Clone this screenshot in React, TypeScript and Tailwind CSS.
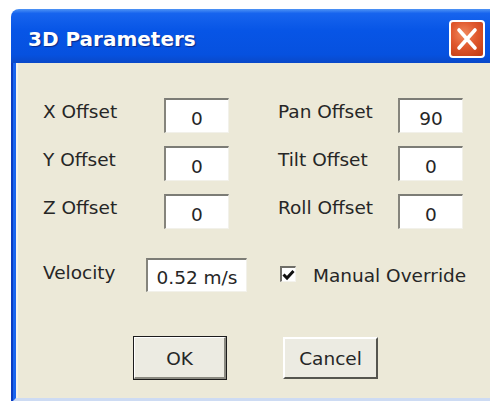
import React from "react";

const font = "font-['DejaVu_Sans','Liberation_Sans',sans-serif]";
const txt = "text-[18.5px] leading-[18px] text-[#262626]";

function Field({ value, w, h }: { value: string; w: string; h: string }) {
  return (
    <div
      className={`${w} ${h} bg-white border-t-2 border-l-2 border-t-[#7c7c76] border-l-[#85847c] border-b border-r border-b-[#f2f1ea] border-r-[#f2f1ea] flex items-center justify-center pt-[5px] ${txt}`}
    >
      {value}
    </div>
  );
}

function Row({
  left,
  leftVal,
  right,
  rightVal,
}: {
  left: string;
  leftVal: string;
  right: string;
  rightVal: string;
}) {
  return (
    <div className="flex items-start h-[35px]">
      <div className={`w-[121px] mt-[5px] ${txt}`}>{left}</div>
      <Field value={leftVal} w="w-[65px]" h="h-[35px]" />
      <div className="w-[49px]" />
      <div className={`w-[120px] mt-[5px] ${txt}`}>{right}</div>
      <Field value={rightVal} w="w-[65px]" h="h-[35px]" />
    </div>
  );
}

export default function App() {
  return (
    <div className={`w-[490px] h-[401px] bg-white pt-[9px] pl-[11px] overflow-hidden ${font}`}>
      <div className="flex flex-col h-[392px]">
        {/* title bar */}
        <div className="h-[54px] shrink-0 rounded-tl-[8px] bg-[linear-gradient(180deg,#4f94f5_0%,#1764ee_8%,#0755e6_40%,#0651df_85%,#0a48c8_100%)] flex items-center justify-between pl-[17px] pr-[5px]">
          <div className="text-white font-bold text-[20px] leading-[20px] mt-[6px] [text-shadow:1px_1px_1px_#0a2a8a]">
            3D Parameters
          </div>
          <div className="w-[36px] h-[38px] mt-[5px] rounded-[4px] border-2 border-white bg-[radial-gradient(circle_at_40%_35%,#f08a5e_0%,#e0582e_45%,#c03a12_100%)] flex items-center justify-center">
            <svg width="24" height="24" viewBox="0 0 24 24">
              <path d="M4 3 L20 21 M20 3 L4 21" stroke="white" strokeWidth="3.6" strokeLinecap="round" />
            </svg>
          </div>
        </div>

        {/* dialog body */}
        <div className="flex-1 border-l-2 border-l-[#0a3cc2]">
          <div className="h-full border-l-[3px] border-l-[#1a64ee] border-b-[3px] border-b-[#cddbf3]">
            <div className="h-full bg-[#ece9d8] border-l-2 border-l-[#f3f1ea] pl-[25px] pt-[35px] flex flex-col">
              <div className="flex flex-col gap-[13px]">
                <Row left="X Offset" leftVal="0" right="Pan Offset" rightVal="90" />
                <Row left="Y Offset" leftVal="0" right="Tilt Offset" rightVal="0" />
                <Row left="Z Offset" leftVal="0" right="Roll Offset" rightVal="0" />
              </div>

              <div className="flex items-start mt-[29px] h-[34px]">
                <div className={`w-[103px] mt-[6px] ${txt}`}>Velocity</div>
                <Field value="0.52 m/s" w="w-[101px]" h="h-[34px]" />
                <div className="w-[33px]" />
                <div className="w-[16px] h-[16px] mt-[8px] bg-white border-t-2 border-l-2 border-t-[#6f6e68] border-l-[#6f6e68] border-b border-r border-b-[#f4f3ee] border-r-[#f4f3ee] flex items-center justify-center">
                  <svg width="13" height="12" viewBox="0 0 13 12">
                    <path d="M1.5 5.5 L5 9 L11.5 2" stroke="#111" strokeWidth="3" fill="none" />
                  </svg>
                </div>
                <div className={`ml-[17px] mt-[9px] ${txt}`}>Manual Override</div>
              </div>

              <div className="flex items-start mt-[44px]">
                <div className="ml-[90px] w-[94px] h-[44px] border border-[#1c1c1c] bg-[#ecebe2] flex">
                  <div className={`flex-1 border-t border-l border-t-white border-l-white border-b-2 border-r-2 border-b-[#8a8980] border-r-[#8a8980] flex items-center justify-center pt-[2px] ${txt}`}>
                    OK
                  </div>
                </div>
                <div className={`ml-[56px] mt-[1px] w-[95px] h-[42px] bg-[#ecebe2] border-t-2 border-l-2 border-t-white border-l-white border-b-2 border-r-2 border-b-[#55554f] border-r-[#55554f] flex items-center justify-center pt-[1px] ${txt}`}>
                  Cancel
                </div>
              </div>
            </div>
          </div>
        </div>
      </div>
    </div>
  );
}
